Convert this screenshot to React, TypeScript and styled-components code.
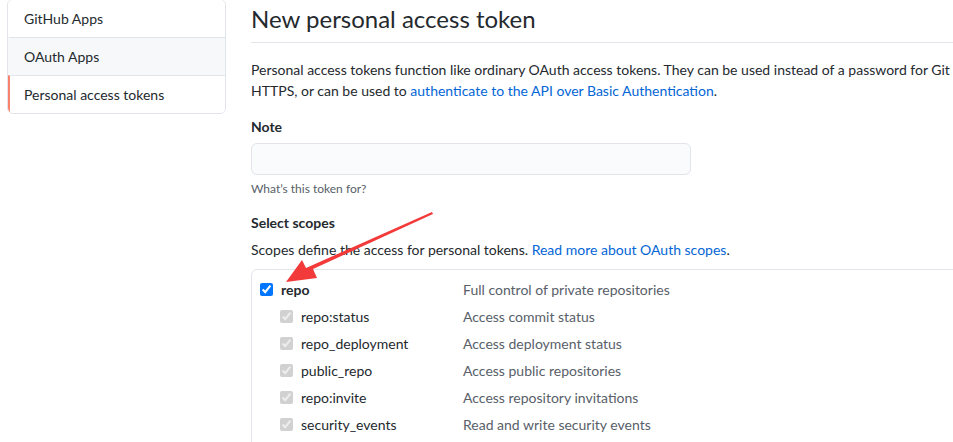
import React from "react";
import styled, { createGlobalStyle } from "styled-components";

const Global = createGlobalStyle`
  html, body { margin: 0; padding: 0; background: #fff; }
  body {
    font-family: Lato, "Liberation Sans", sans-serif;
    color: #24292e;
    font-size: 14px;
    overflow: hidden;
  }
`;

const Page = styled.div`
  position: relative;
  display: flex;
  align-items: flex-start;
  gap: 25px;
  padding-left: 7px;
  width: 953px;
  height: 442px;
  box-sizing: border-box;
  overflow: hidden;
`;

const Sidebar = styled.nav`
  flex: 0 0 219px;
  margin-top: -1px;
  border: 1px solid #e1e4e8;
  border-radius: 6px;
  overflow: hidden;
  box-sizing: border-box;
`;

const NavItem = styled.div<{ $active?: boolean; $hover?: boolean }>`
  height: 37px;
  display: flex;
  align-items: center;
  padding-left: 14px;
  font-size: 14px;
  color: #24292e;
  background: ${(p) => (p.$hover ? "#f6f8fa" : "#fff")};
  border-left: 2px solid ${(p) => (p.$active ? "#f9826c" : "transparent")};
  & + & { border-top: 1px solid #e1e4e8; }
`;

const Main = styled.main`
  flex: 1;
  min-width: 0;
`;

const Title = styled.h2`
  margin: 0;
  padding: 3px 0 8px;
  font-size: 24px;
  font-weight: 400;
  line-height: 31px;
  border-bottom: 1px solid #e1e4e8;
  white-space: nowrap;
`;

const Para = styled.p`
  margin: 16px 0 0;
  font-size: 14px;
  line-height: 21px;
  white-space: nowrap;
`;

const Link = styled.a`
  color: #0366d6;
  text-decoration: none;
`;

const Label = styled.div<{ $top: number }>`
  margin-top: ${(p) => p.$top}px;
  font-size: 14px;
  font-weight: 700;
  line-height: 21px;
`;

const Input = styled.input`
  display: block;
  margin-top: 6px;
  width: 440px;
  height: 32px;
  box-sizing: border-box;
  background: #fafbfc;
  border: 1px solid #e1e4e8;
  border-radius: 6px;
  outline: none;
`;

const Hint = styled.div`
  margin-top: 5px;
  font-size: 12px;
  line-height: 18px;
  color: #586069;
`;

const ScopeNote = styled.p`
  margin: 6px 0 0;
  font-size: 14px;
  line-height: 21px;
  white-space: nowrap;
`;

const ScopeBox = styled.div`
  margin-top: 9px;
  width: 760px;
  border: 1px solid #e1e4e8;
  border-radius: 6px;
  padding: 6px 0 24px 8px;
  box-sizing: border-box;
`;

const ScopeRow = styled.label<{ $child?: boolean }>`
  display: grid;
  grid-template-columns: ${(p) => (p.$child ? "21px 162px" : "21px 182px")} 1fr;
  align-items: center;
  height: 27px;
  padding-left: ${(p) => (p.$child ? "20px" : "0")};
  font-size: 14px;
  line-height: 21px;
`;

const Check = styled.input`
  margin: 0;
  width: 13px;
  height: 13px;
  accent-color: #0075ff;
`;

const ScopeName = styled.span<{ $bold?: boolean }>`
  font-weight: ${(p) => (p.$bold ? 700 : 400)};
`;

const ScopeDesc = styled.span`
  color: #586069;
`;

const Arrow = styled.svg`
  position: absolute;
  left: 0;
  top: 0;
  pointer-events: none;
`;

const children = [
  ["repo:status", "Access commit status"],
  ["repo_deployment", "Access deployment status"],
  ["public_repo", "Access public repositories"],
  ["repo:invite", "Access repository invitations"],
  ["security_events", "Read and write security events"],
];

export default function App() {
  return (
    <Page>
      <Global />
      <Sidebar>
        <NavItem>GitHub Apps</NavItem>
        <NavItem $hover>OAuth Apps</NavItem>
        <NavItem $active>Personal access tokens</NavItem>
      </Sidebar>
      <Main>
        <Title>New personal access token</Title>
        <Para>
          Personal access tokens function like ordinary OAuth access tokens. They can be used instead of a password for Git
          <br />
          HTTPS, or can be used to <Link href="#">authenticate to the API over Basic Authentication</Link>.
        </Para>
        <Label $top={15}>Note</Label>
        <Input type="text" />
        <Hint>What’s this token for?</Hint>
        <Label $top={14}>Select scopes</Label>
        <ScopeNote>
          Scopes define the access for personal tokens. <Link href="#">Read more about OAuth scopes</Link>.
        </ScopeNote>
        <ScopeBox>
          <ScopeRow>
            <Check type="checkbox" defaultChecked />
            <ScopeName $bold>repo</ScopeName>
            <ScopeDesc>Full control of private repositories</ScopeDesc>
          </ScopeRow>
          {children.map(([n, d]) => (
            <ScopeRow $child key={n}>
              <Check type="checkbox" checked disabled readOnly />
              <ScopeName>{n}</ScopeName>
              <ScopeDesc>{d}</ScopeDesc>
            </ScopeRow>
          ))}
        </ScopeBox>
      </Main>
      <Arrow width="953" height="442" viewBox="0 0 953 442">
        <path
          d="M433 214 L313 269 L317 278 L286 282 L302 260 L306 268 L432 212 Z"
          fill="#f23a3a"
        />
      </Arrow>
    </Page>
  );
}
